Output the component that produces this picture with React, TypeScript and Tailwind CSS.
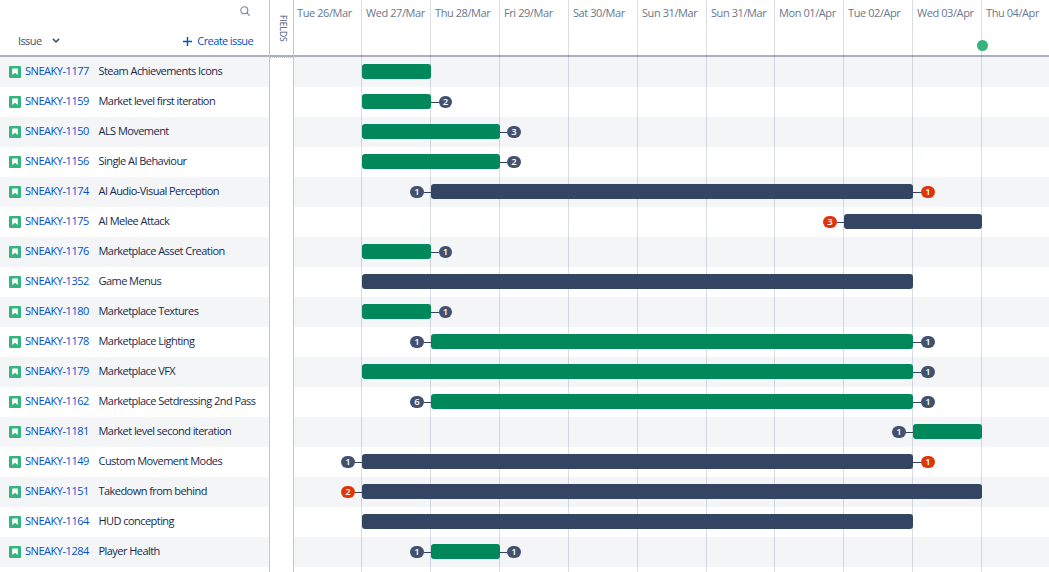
import React from 'react';
import classNames from 'clsx';

type Tone = 'navy' | 'red';

interface IBadge {
  count: number;
  tone: Tone;
  narrow?: boolean;
}

interface IIssue {
  id: number;
  title: string;
  start: number;
  end: number;
  done?: boolean;
  before?: IBadge;
  after?: IBadge;
}

// x offsets of the day boundaries, measured from the left of the timeline
const DAYS = [0, 68, 137, 206, 275, 344, 413, 481, 550, 619, 688];

const LABELS = [
  'Tue 26/Mar',
  'Wed 27/Mar',
  'Thu 28/Mar',
  'Fri 29/Mar',
  'Sat 30/Mar',
  'Sun 31/Mar',
  'Sun 31/Mar',
  'Mon 01/Apr',
  'Tue 02/Apr',
  'Wed 03/Apr',
  'Thu 04/Apr',
];

const navy = (count: number): IBadge => ({ count, tone: 'navy' });
const red = (count: number): IBadge => ({ count, tone: 'red' });

const ISSUES: IIssue[] = [
  { id: 1177, title: 'Steam Achievements Icons', start: 1, end: 2, done: true },
  { id: 1159, title: 'Market level first iteration', start: 1, end: 2, done: true, after: navy(2) },
  { id: 1150, title: 'ALS Movement', start: 1, end: 3, done: true, after: navy(3) },
  { id: 1156, title: 'Single AI Behaviour', start: 1, end: 3, done: true, after: navy(2) },
  { id: 1174, title: 'AI Audio-Visual Perception', start: 2, end: 9, before: navy(1), after: red(1) },
  { id: 1175, title: 'AI Melee Attack', start: 8, end: 10, before: red(3) },
  { id: 1176, title: 'Marketplace Asset Creation', start: 1, end: 2, done: true, after: navy(1) },
  { id: 1352, title: 'Game Menus', start: 1, end: 9 },
  { id: 1180, title: 'Marketplace Textures', start: 1, end: 2, done: true, after: navy(1) },
  { id: 1178, title: 'Marketplace Lighting', start: 2, end: 9, done: true, before: navy(1), after: navy(1) },
  { id: 1179, title: 'Marketplace VFX', start: 1, end: 9, done: true, after: navy(1) },
  { id: 1162, title: 'Marketplace Setdressing 2nd Pass', start: 2, end: 9, done: true, before: navy(6), after: navy(1) },
  { id: 1181, title: 'Market level second iteration', start: 9, end: 10, done: true, before: navy(1) },
  { id: 1149, title: 'Custom Movement Modes', start: 1, end: 9, before: navy(1), after: red(1) },
  { id: 1151, title: 'Takedown from behind', start: 1, end: 10, before: red(2) },
  { id: 1164, title: 'HUD concepting', start: 1, end: 9 },
  { id: 1284, title: 'Player Health', start: 2, end: 3, done: true, before: navy(1), after: navy(1) },
];

const StoryIcon = () => (
  <svg width="12" height="12" viewBox="0 0 12 12" className="shrink-0">
    <rect width="12" height="12" rx="1" fill="#36b37e" />
    <path d="M3.2 2.6h5.6v6.4L6 6.8 3.2 9z" fill="#fff" />
  </svg>
);

const Badge: React.FC<IBadge> = ({ count, tone, narrow }) => (
  <span
    className={classNames(
      'flex h-3 shrink-0 items-center justify-center rounded-full text-[9.5px] leading-3 font-semibold text-white',
      narrow ? 'w-[13px]' : 'w-3.5',
      tone === 'red' ? 'bg-[#de350b]' : 'bg-[#42526e]',
    )}
  >
    {count}
  </span>
);

const TimelineRow: React.FC<{ issue: IIssue }> = ({ issue }) => {
  const left = DAYS[issue.start] - (issue.before ? 21 : 0);
  return (
    <div className="flex h-[30px] items-center" style={{ paddingLeft: left }}>
      {issue.before && (
        <>
          <Badge {...issue.before} />
          <span className="mt-px h-px w-[7px] shrink-0 bg-[#344563]" />
        </>
      )}
      <span
        className={classNames(
          'mb-px h-[15px] shrink-0 rounded-[3px]',
          issue.done ? 'bg-[#00875a]' : 'bg-[#344563]',
        )}
        style={{ width: DAYS[issue.end] - DAYS[issue.start] }}
      />
      {issue.after && (
        <>
          <span
            className={classNames('mt-px h-px shrink-0 bg-[#344563]', issue.end === 3 ? 'w-[7px]' : 'w-2')}
          />
          <Badge {...issue.after} narrow={issue.end === 2} />
        </>
      )}
    </div>
  );
};

const IssuePanel = () => (
  <section className="flex w-[270px] shrink-0 flex-col border-r border-[#c1c7d0]">
    <header className="flex h-[57px] shrink-0 flex-col border-b-2 border-[#aab0be]">
      <div className="flex h-[26px] justify-end pt-[6px] pr-[19px]">
        <svg width="10" height="10" viewBox="0 0 10 10" fill="none" stroke="#7a869a" strokeWidth="1.1">
          <circle cx="4.3" cy="4.3" r="3.5" />
          <path d="M6.9 6.9l2.4 2.4" strokeLinecap="round" />
        </svg>
      </div>
      <div className="flex h-[30px] items-center pr-4 pl-[18px]">
        <span className="mt-px w-[34px] text-[#42526e] tracking-[-0.6px]">Issue</span>
        <svg width="8" height="6" viewBox="0 0 8 6" fill="none" stroke="#42526e" strokeWidth="1.6" className="mt-px">
          <path d="M1.4 1.4L4 4l2.6-2.6" strokeLinecap="round" strokeLinejoin="round" />
        </svg>
        <span className="mt-px ml-auto flex items-center gap-x-[5px] text-[#0052cc] tracking-[-0.6px]">
          <svg width="9" height="9" viewBox="0 0 9 9" stroke="#0052cc" strokeWidth="1.4" className="mt-0.5">
            <path d="M4.5 0v9M0 4.5h9" />
          </svg>
          Create issue
        </span>
      </div>
    </header>
    {ISSUES.map((issue) => (
      <div key={issue.id} className="flex h-[30px] shrink-0 items-center pl-[9px] odd:bg-white even:bg-[#f4f5f7]">
        <StoryIcon />
        <span className="mb-px ml-1 w-[73.5px] whitespace-nowrap text-[#0052cc] tracking-[-0.46px]">
          SNEAKY-{issue.id}
        </span>
        <span className="mb-px whitespace-nowrap text-[#172b4d] tracking-[-0.55px]">{issue.title}</span>
      </div>
    ))}
  </section>
);

const FieldsStrip = () => (
  <section className="flex w-6 shrink-0 flex-col border-r border-[#c1c7d0]">
    <div className="flex h-[57px] shrink-0 justify-center border-b-2 border-[#aab0be] pt-[15px]">
      <span className="ml-[3px] h-7 text-[8.5px] leading-3 font-medium text-[#42526e] [writing-mode:vertical-rl]">
        FIELDS
      </span>
    </div>
    <div className="border-t border-dotted border-[#c1c7d0]" />
  </section>
);

const COLUMNS = 'grid grid-cols-[68px_69px_69px_69px_69px_69px_68px_69px_69px_69px_1fr]';

const Timeline = () => (
  <section className="relative flex min-w-0 flex-1 flex-col overflow-hidden">
    <header className={classNames(COLUMNS, 'h-[57px] shrink-0 border-b-2 border-[#aab0be]')}>
      {LABELS.map((label, i) => (
        <span
          key={i}
          className={classNames(
            'pt-[5px] leading-4 whitespace-nowrap text-[#6b778c] tracking-[-0.42px]',
            i === 0 ? 'pl-[3px]' : 'pl-1',
          )}
        >
          {label}
        </span>
      ))}
    </header>
    <div>
      {ISSUES.map((issue) => (
        <div key={issue.id} className="h-[30px] odd:bg-[#f4f5f7]" />
      ))}
    </div>
    {/* day separators run over the stripes but under the bars */}
    <div className={classNames(COLUMNS, 'absolute inset-0')}>
      {DAYS.map((day, i) => (
        <span key={day} className={classNames(i < 10 && 'border-r border-[#091e42]/15')} />
      ))}
    </div>
    <span className="absolute top-[39.5px] left-[682.5px] size-[11px] rounded-full bg-[#36b37e]" />
    <div className="absolute inset-x-0 top-[57px]">
      {ISSUES.map((issue) => (
        <TimelineRow key={issue.id} issue={issue} />
      ))}
    </div>
  </section>
);

const App = () => (
  <main className="flex h-[572px] w-[1049px] overflow-hidden bg-white font-['Open_Sans','Noto_Sans',sans-serif] text-[11px]">
    <IssuePanel />
    <FieldsStrip />
    <Timeline />
  </main>
);

export default App;
